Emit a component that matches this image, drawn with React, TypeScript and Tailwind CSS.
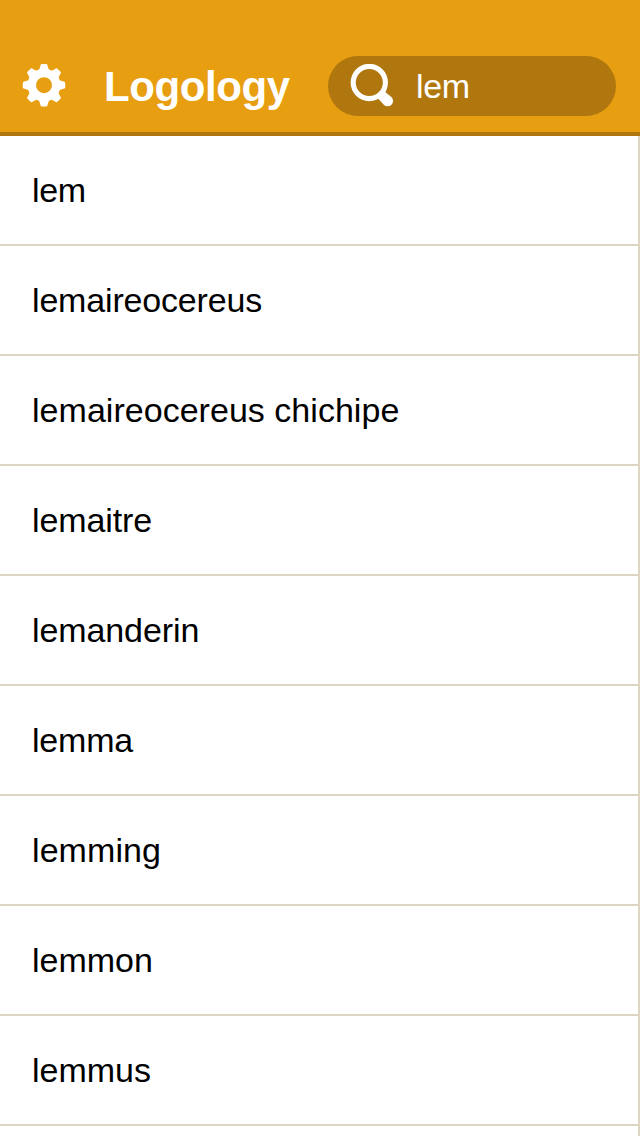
const words = [
  { text: "lem", tracking: "tracking-[-0.4px]" },
  { text: "lemaireocereus", tracking: "tracking-[-0.17px]" },
  { text: "lemaireocereus chichipe", tracking: "tracking-[0.03px]" },
  { text: "lemaitre", tracking: "tracking-[-0.1px]" },
  { text: "lemanderin", tracking: "tracking-[-0.1px]" },
  { text: "lemma", tracking: "tracking-[-0.2px]" },
  { text: "lemming", tracking: "tracking-[0.08px]" },
  { text: "lemmon", tracking: "tracking-normal" },
  { text: "lemmus", tracking: "tracking-normal" },
];

const toothAngles = [0, 45, 90, 135, 180, 225, 270, 315];

export default function App() {
  return (
    <div className="flex h-[1136px] w-[640px] flex-col overflow-hidden bg-white font-['Liberation_Sans',sans-serif]">
      <header className="flex h-[136px] shrink-0 items-end border-b-4 border-[#b0770f] bg-[#e89e11] pb-4 text-white">
        <div className="flex h-[60px] w-[328px] items-center">
          <svg className="ml-[22px] h-11 w-11" viewBox="0 0 44 44" fill="none">
            <circle cx="22" cy="21.2" r="12.2" stroke="currentColor" strokeWidth="8.4" />
            {toothAngles.map((a) => (
              <path key={a} d="M15.7 7.2Q17 6.2 17.4 5L18.6.9Q18.9 0 19.8 0H24.2Q25.1 0 25.4.9L26.6 5Q27 6.2 28.3 7.2Z" fill="currentColor" transform={`rotate(${a} 22 21.2)`} />
            ))}
          </svg>
          <h1 className="ml-[38px] pt-0.5 text-[42px] leading-[60px] font-bold tracking-[-0.4px]">Logology</h1>
        </div>
        <div className="flex h-[60px] w-72 items-center rounded-full bg-[#b0770f]">
          <svg className="ml-[22px] h-11 w-11" viewBox="0 0 44 44" fill="none" stroke="currentColor">
            <circle cx="19.3" cy="18.5" r="16.1" strokeWidth="5.1" />
            <path d="M26 34.4Q28 34 29 35.6L33.8 40.8A5.4 5.4 0 0 0 41.4 33L35.8 28.4Q34.5 27.4 35 25.6Z" fill="currentColor" stroke="none" />
          </svg>
          <span className="ml-[22px] text-[34px] tracking-[-0.4px]">lem</span>
        </div>
      </header>
      <ul className="grow border-r-2 border-[#ddd5c3]">
        {words.map(({ text, tracking }) => (
          <li key={text} className={`flex h-[110px] items-center border-b-2 border-[#ddd5c3] pl-8 text-[34px] text-black ${tracking}`}>{text}</li>
        ))}
      </ul>
    </div>
  );
}
